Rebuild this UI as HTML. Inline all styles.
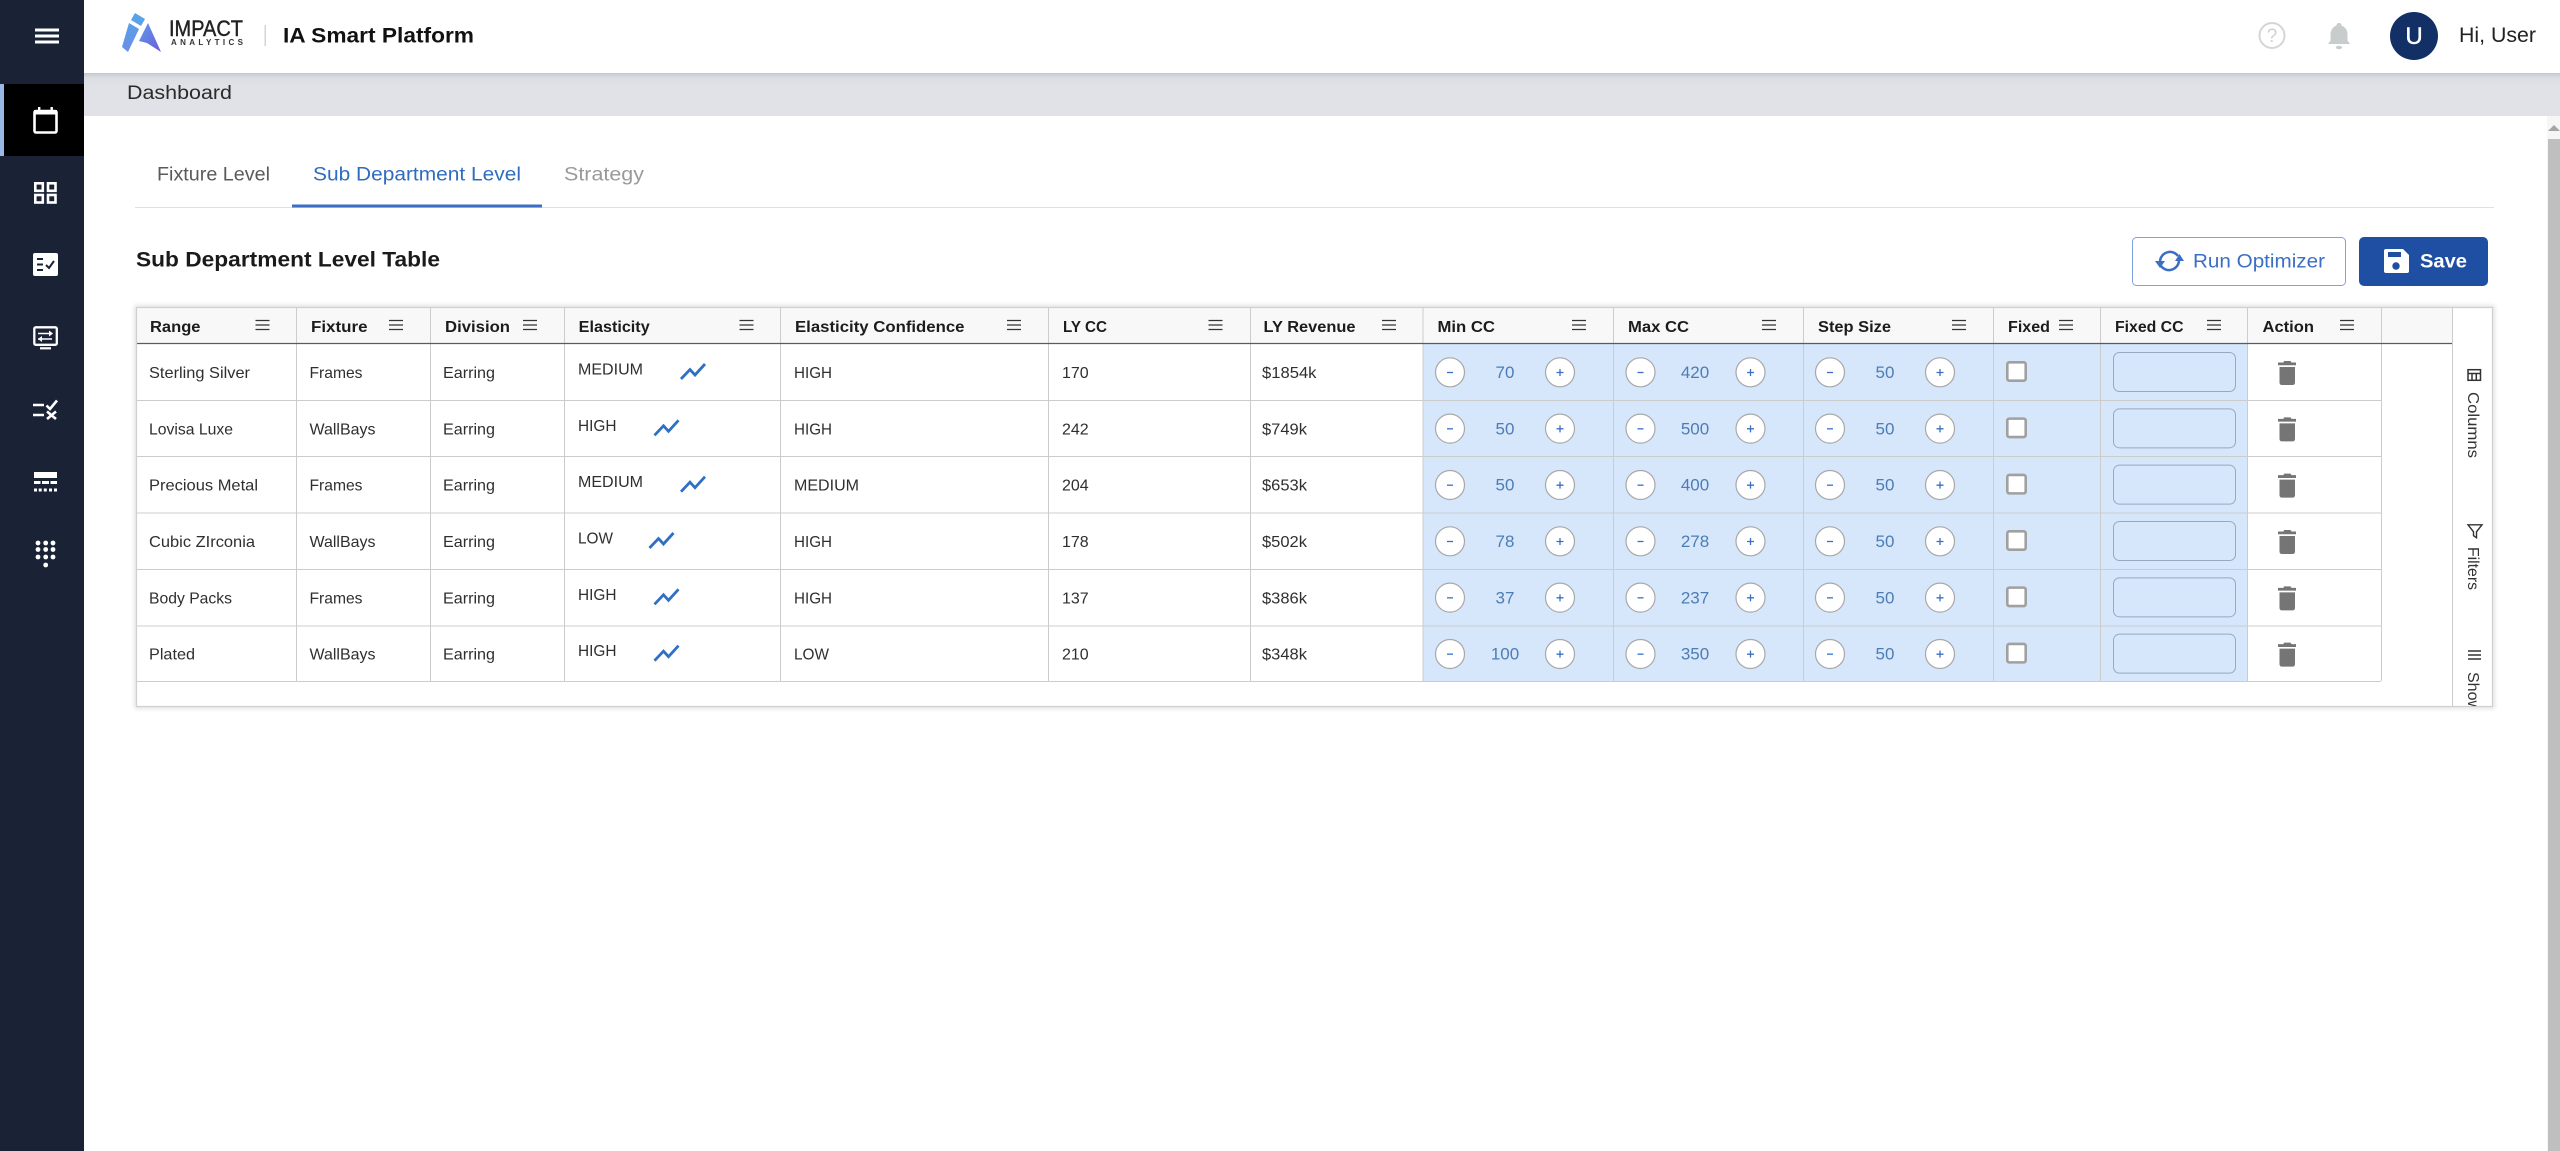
<!DOCTYPE html>
<html lang="en">
<head>
<meta charset="utf-8">
<title>IA Smart Platform</title>
<style>
html,body{margin:0;padding:0;background:#fff;overflow:hidden;width:2560px;height:1151px}
svg{display:block}
text{font-family:"Liberation Sans",sans-serif}
.h{font-size:16px;font-weight:700;fill:#1c1c1c}
.d{font-size:16px;fill:#2f2f2f}
.v{font-size:17px;fill:#4d7db5;text-anchor:middle}
.s{font-size:16px;fill:#333}
</style>
</head>
<body>
<svg xmlns="http://www.w3.org/2000/svg" width="2560" height="1151" viewBox="0 0 2560 1151">
<defs>
<linearGradient id="lg" x1="0" y1="0" x2="0" y2="1"><stop offset="0" stop-color="#58a0ea"/><stop offset="1" stop-color="#6a8ee6"/></linearGradient>
<linearGradient id="lr" x1="0" y1="0" x2="1" y2="1"><stop offset="0" stop-color="#5f9cea"/><stop offset="1" stop-color="#6a5adc"/></linearGradient>
<linearGradient id="bs" x1="0" y1="0" x2="0" y2="1"><stop offset="0" stop-color="#c4c7ce"/><stop offset="0.35" stop-color="#dcdee4"/><stop offset="1" stop-color="#e0e2e8"/></linearGradient>
<filter id="sh" x="-2%" y="-5%" width="104%" height="110%"><feGaussianBlur stdDeviation="2"/></filter>
<clipPath id="pc"><rect x="2452" y="307" width="41" height="399"/></clipPath>
<g id="mn"><path d="M0 0.5h14M0 5h14M0 9.5h14" stroke="#333" stroke-width="1.3" fill="none"/></g>
<g id="tr"><path d="M1 16L10 6.5L15 12L25 1" stroke="#2f6fc4" stroke-width="2.8" fill="none"/></g>
<g id="st">
<circle cx="0" cy="372.3" r="14.5" fill="#fff" stroke="#a8a8a8" stroke-width="1.2"/>
<path d="M-3 372.5h6" stroke="#3b6fc4" stroke-width="1.3"/>
<circle cx="110" cy="372.3" r="14.5" fill="#fff" stroke="#a8a8a8" stroke-width="1.2"/>
<path d="M106.500 372.500h7M110 369v7" stroke="#3b6fc4" stroke-width="1.3"/>
</g>
<g id="cb"><rect x="2007.300" y="362.300" width="18.400" height="18.400" rx="2" fill="#fff" stroke="#a0a0a0" stroke-width="2.600"/></g>
<g id="ip"><rect x="2113.500" y="352.500" width="122" height="39" rx="6" fill="#d6e6fb" stroke="#98a8c0" stroke-width="1"/></g>
<g id="tb" fill="#757575"><path d="M2284 361h6.500l1 1.500h4.500v2.800h-18v-2.800h5.500z"/><path d="M2279.500 367h15.500v15.500q0 2.500-2.500 2.500h-10.500q-2.500 0-2.500-2.500z"/></g>
</defs>

<!-- page base -->
<rect width="2560" height="1151" fill="#fff"/>

<!-- breadcrumb band -->
<rect x="84" y="73" width="2476" height="43" fill="#e0e2e8"/>
<rect x="84" y="73" width="2476" height="14" fill="url(#bs)"/>
<text x="127" y="99" font-size="19" fill="#2b2b2b" textLength="105" lengthAdjust="spacingAndGlyphs">Dashboard</text>

<!-- header -->
<rect x="84" y="0" width="2476" height="73" fill="#fff"/>
<polygon points="135,13 145,19 141,26 131,20" fill="#5aa2ea"/>
<polygon points="129,23 139,29 128,52 122,47" fill="url(#lg)"/>
<polygon points="148,23 161,52 147,43 139,41" fill="url(#lr)"/>
<text x="169" y="36" font-size="22" fill="#222" stroke="#222" stroke-width=".4" textLength="74" lengthAdjust="spacingAndGlyphs">IMPACT</text>
<text x="171" y="45" font-size="8" font-weight="700" fill="#333" textLength="72" lengthAdjust="spacing">ANALYTICS</text>
<rect x="264.500" y="25" width="1.500" height="21" fill="#d4d4d4"/>
<text x="283" y="42.500" font-size="21" font-weight="700" fill="#111" textLength="191" lengthAdjust="spacingAndGlyphs">IA Smart Platform</text>

<circle cx="2272" cy="35.500" r="12.500" fill="none" stroke="#d4d6d6" stroke-width="2"/>
<text x="2272" y="42" font-size="19" fill="#cfd1d1" text-anchor="middle">?</text>
<path d="M2339 23c-1.500 0-2.500 1-2.500 2.500c-4 1.500-6 5-6 9v6l-2.500 3.500h22l-2.500-3.500v-6c0-4-2-7.500-6-9c0-1.500-1-2.500-2.500-2.500z" fill="#c8cccc"/>
<ellipse cx="2339" cy="47.500" rx="3" ry="1.700" fill="#c8cccc"/>
<circle cx="2414" cy="36" r="24" fill="#122f66"/>
<text x="2414" y="44" font-size="24" fill="#fff" stroke="#fff" stroke-width=".4" text-anchor="middle">U</text>
<text x="2459" y="42" font-size="21" fill="#222" textLength="77" lengthAdjust="spacingAndGlyphs">Hi, User</text>

<!-- sidebar -->
<rect x="0" y="0" width="84" height="1151" fill="#1a2236"/>
<rect x="0" y="84" width="84" height="72" fill="#000"/>
<rect x="0" y="84" width="4" height="72" fill="#9ab8e6"/>
<path d="M35 30h24M35 36h24M35 42h24" stroke="#fff" stroke-width="3" fill="none"/>
<!-- calendar -->
<rect x="34.500" y="111" width="22" height="21.500" rx="1.500" fill="none" stroke="#fff" stroke-width="2.600"/>
<rect x="34" y="110" width="23" height="4.500" fill="#fff"/>
<rect x="38" y="107" width="2.400" height="4" fill="#fff"/><rect x="50.500" y="107" width="2.400" height="4" fill="#fff"/>
<!-- grid -->
<g fill="none" stroke="#fff" stroke-width="2.600"><rect x="35.300" y="183.300" width="7.500" height="7.500"/><rect x="48" y="183.300" width="7.500" height="7.500"/><rect x="35.300" y="195" width="7.500" height="7.500"/><rect x="48" y="195" width="7.500" height="7.500"/></g>
<!-- list check -->
<rect x="33" y="253" width="25" height="23" rx="2" fill="#fff"/>
<path d="M37 259h6M37 264.500h6M37 270h6" stroke="#1a2236" stroke-width="2" fill="none"/>
<path d="M46 265l3 3l5-7" stroke="#1a2236" stroke-width="2" fill="none"/>
<!-- monitor -->
<rect x="34.300" y="327.300" width="22.500" height="17.500" rx="1.500" fill="none" stroke="#fff" stroke-width="2.300"/>
<path d="M40 348.300h11" stroke="#fff" stroke-width="2.200"/>
<path d="M38 333.500h14M38 339h14" stroke="#fff" stroke-width="1.600"/>
<path d="M49 330.500l4 3l-4 3zM42 336l-4 3l4 3z" fill="#fff"/>
<!-- rule -->
<path d="M33 405h11M33 415h11" stroke="#fff" stroke-width="2.500"/>
<path d="M46.500 405.500l3.500 3.500l7-8.500M47 411.500l9 7.500M56 411.500l-9 7.500" stroke="#fff" stroke-width="2.600" fill="none"/>
<!-- table -->
<rect x="34" y="472" width="23" height="6" fill="#fff"/>
<path d="M34 482.500h6.500M42 482.500h7M50.500 482.500h6.500" stroke="#fff" stroke-width="3"/>
<path d="M34 490h3M38.700 490h3M43.800 490h3M49 490h3M54 490h3" stroke="#fff" stroke-width="3"/>
<!-- dialpad -->
<g fill="#fff"><circle cx="38" cy="543" r="2.400"/><circle cx="45.700" cy="543" r="2.400"/><circle cx="53" cy="543" r="2.400"/><circle cx="38" cy="549.500" r="2.400"/><circle cx="45.700" cy="549.500" r="2.400"/><circle cx="53" cy="549.500" r="2.400"/><circle cx="38" cy="557" r="2.400"/><circle cx="45.700" cy="557" r="2.400"/><circle cx="53" cy="557" r="2.400"/><circle cx="45.700" cy="565" r="2.400"/></g>

<!-- tabs -->
<text x="157" y="180.500" font-size="19" fill="#5a5a5a" textLength="113" lengthAdjust="spacingAndGlyphs">Fixture Level</text>
<text x="313" y="180.500" font-size="19" fill="#2f6cc0" textLength="208" lengthAdjust="spacingAndGlyphs">Sub Department Level</text>
<text x="564" y="180.500" font-size="19" fill="#9a9a9a" textLength="80" lengthAdjust="spacingAndGlyphs">Strategy</text>
<rect x="135" y="207" width="2359" height="1" fill="#e0e0e0"/>
<rect x="292" y="204.500" width="250" height="3" fill="#3b6fc4"/>

<text x="136" y="266.500" font-size="21" font-weight="700" fill="#1a1a1a" textLength="304" lengthAdjust="spacingAndGlyphs">Sub Department Level Table</text>

<!-- buttons -->
<rect x="2132.500" y="237.500" width="213" height="48" rx="4" fill="#fff" stroke="#7fa3e0" stroke-width="1"/>
<g fill="none" stroke="#3b6fc4" stroke-width="2.500"><path d="M2160 261A10 10 0 0 1 2178 256"/><path d="M2179 261A10 10 0 0 1 2161 266"/></g>
<polygon points="2175,261 2184,261 2179.500,254" fill="#3b6fc4"/>
<polygon points="2155,261 2165,261 2160,268" fill="#3b6fc4"/>
<text x="2193" y="267.500" font-size="19" fill="#3b6fc4" textLength="132" lengthAdjust="spacingAndGlyphs">Run Optimizer</text>

<rect x="2359" y="237" width="129" height="49" rx="5" fill="#1f4fa3"/>
<path d="M2386 249h17l6 6v16a2 2 0 0 1-2 2h-21a2 2 0 0 1-2-2v-20a2 2 0 0 1 2-2z" fill="#fff"/>
<rect x="2388" y="252" width="13" height="5" fill="#1f4fa3"/>
<circle cx="2396" cy="266" r="3.700" fill="#1f4fa3"/>
<text x="2420" y="267.500" font-size="19" font-weight="700" fill="#fff" textLength="47" lengthAdjust="spacingAndGlyphs">Save</text>

<!-- scrollbar -->
<rect x="2547" y="116" width="13" height="1035" fill="#f6f6f6"/>
<polygon points="2554,125 2560,131 2548,131" fill="#a4a4a4"/>
<rect x="2548" y="139" width="12" height="1012" fill="#bfbfbf"/>

<!-- grid container -->
<rect x="134" y="305" width="2361" height="404" fill="#000" opacity=".1" filter="url(#sh)"/>
<rect x="136" y="307" width="2357" height="400" fill="#fff"/>
<rect x="136" y="308" width="2316.500" height="36" fill="#f8f8f8"/>
<rect x="1423" y="344" width="824.500" height="337.500" fill="#d6e6fb"/>

<!-- row lines -->
<g stroke="#cccccc" stroke-width="1" fill="none">
<path d="M136 400.500H2381M136 456.500H2381M136 513H2381M136 569.500H2381M136 626H2381M136 681.500H2381"/>
<path d="M296.500 308V681M430.500 308V681M564.500 308V681M780.500 308V681M1048.500 308V681M1250.500 308V681M1423 308V681M1613.500 308V681M1803.500 308V681M1993.500 308V681M2100.500 308V681M2247.500 308V681M2381.500 308V681"/>
</g>
<path d="M136 343.500H2452.500" stroke="#4f5f68" stroke-width="1.200"/>
<rect x="136.500" y="307.500" width="2356" height="399" fill="none" stroke="#d0d0d0" stroke-width="1.200"/>
<path d="M2452.500 308V706" stroke="#cccccc" stroke-width="1"/>

<!-- header text -->
<text class="h" x="150" y="332" textLength="50.500" lengthAdjust="spacingAndGlyphs">Range</text>
<use href="#mn" x="255.500" y="320"/>
<text class="h" x="311" y="332" textLength="56.500" lengthAdjust="spacingAndGlyphs">Fixture</text>
<use href="#mn" x="389" y="320"/>
<text class="h" x="445" y="332" textLength="65" lengthAdjust="spacingAndGlyphs">Division</text>
<use href="#mn" x="523" y="320"/>
<text class="h" x="578.700" y="332" textLength="71" lengthAdjust="spacingAndGlyphs">Elasticity</text>
<use href="#mn" x="739.500" y="320"/>
<text class="h" x="795" y="332" textLength="169.500" lengthAdjust="spacingAndGlyphs">Elasticity Confidence</text>
<use href="#mn" x="1007" y="320"/>
<text class="h" x="1063" y="332" textLength="44" lengthAdjust="spacingAndGlyphs">LY CC</text>
<use href="#mn" x="1208.500" y="320"/>
<text class="h" x="1263.500" y="332" textLength="92" lengthAdjust="spacingAndGlyphs">LY Revenue</text>
<use href="#mn" x="1382" y="320"/>
<text class="h" x="1437.500" y="332" textLength="57.500" lengthAdjust="spacingAndGlyphs">Min CC</text>
<use href="#mn" x="1572" y="320"/>
<text class="h" x="1628" y="332" textLength="61" lengthAdjust="spacingAndGlyphs">Max CC</text>
<use href="#mn" x="1762" y="320"/>
<text class="h" x="1818" y="332" textLength="73" lengthAdjust="spacingAndGlyphs">Step Size</text>
<use href="#mn" x="1952" y="320"/>
<text class="h" x="2008" y="332" textLength="42" lengthAdjust="spacingAndGlyphs">Fixed</text>
<use href="#mn" x="2059" y="320"/>
<text class="h" x="2115" y="332" textLength="68.500" lengthAdjust="spacingAndGlyphs">Fixed CC</text>
<use href="#mn" x="2207" y="320"/>
<text class="h" x="2262.500" y="332" textLength="51.500" lengthAdjust="spacingAndGlyphs">Action</text>
<use href="#mn" x="2340" y="320"/>

<!-- row 1 -->
<g>
<text class="d" x="149" y="378" textLength="101" lengthAdjust="spacingAndGlyphs">Sterling Silver</text>
<text class="d" x="309.500" y="378" textLength="53" lengthAdjust="spacingAndGlyphs">Frames</text>
<text class="d" x="443" y="378" textLength="52" lengthAdjust="spacingAndGlyphs">Earring</text>
<text class="d" x="578" y="374.500" textLength="65" lengthAdjust="spacingAndGlyphs">MEDIUM</text>
<use href="#tr" x="680" y="363"/>
<text class="d" x="794" y="378" textLength="38" lengthAdjust="spacingAndGlyphs">HIGH</text>
<text class="d" x="1062" y="378">170</text>
<text class="d" x="1262" y="378" textLength="54.500" lengthAdjust="spacingAndGlyphs">$1854k</text>
<use href="#st" x="1450"/><text class="v" x="1505" y="378">70</text>
<use href="#st" x="1640.500"/><text class="v" x="1695" y="378">420</text>
<use href="#st" x="1830"/><text class="v" x="1885" y="378">50</text>
<use href="#cb"/><use href="#ip"/><use href="#tb"/>
</g>
<!-- row 2 -->
<g transform="translate(0,56.330)">
<text class="d" x="149" y="378" textLength="84" lengthAdjust="spacingAndGlyphs">Lovisa Luxe</text>
<text class="d" x="309.500" y="378" textLength="66" lengthAdjust="spacingAndGlyphs">WallBays</text>
<text class="d" x="443" y="378" textLength="52" lengthAdjust="spacingAndGlyphs">Earring</text>
<text class="d" x="578" y="374.500" textLength="38.500" lengthAdjust="spacingAndGlyphs">HIGH</text>
<use href="#tr" x="653.500" y="363"/>
<text class="d" x="794" y="378" textLength="38" lengthAdjust="spacingAndGlyphs">HIGH</text>
<text class="d" x="1062" y="378">242</text>
<text class="d" x="1262" y="378" textLength="45" lengthAdjust="spacingAndGlyphs">$749k</text>
<use href="#st" x="1450"/><text class="v" x="1505" y="378">50</text>
<use href="#st" x="1640.500"/><text class="v" x="1695" y="378">500</text>
<use href="#st" x="1830"/><text class="v" x="1885" y="378">50</text>
<use href="#cb"/><use href="#ip"/><use href="#tb"/>
</g>
<!-- row 3 -->
<g transform="translate(0,112.670)">
<text class="d" x="149" y="378" textLength="109" lengthAdjust="spacingAndGlyphs">Precious Metal</text>
<text class="d" x="309.500" y="378" textLength="53" lengthAdjust="spacingAndGlyphs">Frames</text>
<text class="d" x="443" y="378" textLength="52" lengthAdjust="spacingAndGlyphs">Earring</text>
<text class="d" x="578" y="374.500" textLength="65" lengthAdjust="spacingAndGlyphs">MEDIUM</text>
<use href="#tr" x="680" y="363"/>
<text class="d" x="794" y="378" textLength="65" lengthAdjust="spacingAndGlyphs">MEDIUM</text>
<text class="d" x="1062" y="378">204</text>
<text class="d" x="1262" y="378" textLength="45" lengthAdjust="spacingAndGlyphs">$653k</text>
<use href="#st" x="1450"/><text class="v" x="1505" y="378">50</text>
<use href="#st" x="1640.500"/><text class="v" x="1695" y="378">400</text>
<use href="#st" x="1830"/><text class="v" x="1885" y="378">50</text>
<use href="#cb"/><use href="#ip"/><use href="#tb"/>
</g>
<!-- row 4 -->
<g transform="translate(0,169)">
<text class="d" x="149" y="378" textLength="106" lengthAdjust="spacingAndGlyphs">Cubic ZIrconia</text>
<text class="d" x="309.500" y="378" textLength="66" lengthAdjust="spacingAndGlyphs">WallBays</text>
<text class="d" x="443" y="378" textLength="52" lengthAdjust="spacingAndGlyphs">Earring</text>
<text class="d" x="578" y="374.500" textLength="35" lengthAdjust="spacingAndGlyphs">LOW</text>
<use href="#tr" x="648.500" y="363"/>
<text class="d" x="794" y="378" textLength="38" lengthAdjust="spacingAndGlyphs">HIGH</text>
<text class="d" x="1062" y="378">178</text>
<text class="d" x="1262" y="378" textLength="45" lengthAdjust="spacingAndGlyphs">$502k</text>
<use href="#st" x="1450"/><text class="v" x="1505" y="378">78</text>
<use href="#st" x="1640.500"/><text class="v" x="1695" y="378">278</text>
<use href="#st" x="1830"/><text class="v" x="1885" y="378">50</text>
<use href="#cb"/><use href="#ip"/><use href="#tb"/>
</g>
<!-- row 5 -->
<g transform="translate(0,225.330)">
<text class="d" x="149" y="378" textLength="83" lengthAdjust="spacingAndGlyphs">Body Packs</text>
<text class="d" x="309.500" y="378" textLength="53" lengthAdjust="spacingAndGlyphs">Frames</text>
<text class="d" x="443" y="378" textLength="52" lengthAdjust="spacingAndGlyphs">Earring</text>
<text class="d" x="578" y="374.500" textLength="38.500" lengthAdjust="spacingAndGlyphs">HIGH</text>
<use href="#tr" x="653.500" y="363"/>
<text class="d" x="794" y="378" textLength="38" lengthAdjust="spacingAndGlyphs">HIGH</text>
<text class="d" x="1062" y="378">137</text>
<text class="d" x="1262" y="378" textLength="45" lengthAdjust="spacingAndGlyphs">$386k</text>
<use href="#st" x="1450"/><text class="v" x="1505" y="378">37</text>
<use href="#st" x="1640.500"/><text class="v" x="1695" y="378">237</text>
<use href="#st" x="1830"/><text class="v" x="1885" y="378">50</text>
<use href="#cb"/><use href="#ip"/><use href="#tb"/>
</g>
<!-- row 6 -->
<g transform="translate(0,281.670)">
<text class="d" x="149" y="378" textLength="46" lengthAdjust="spacingAndGlyphs">Plated</text>
<text class="d" x="309.500" y="378" textLength="66" lengthAdjust="spacingAndGlyphs">WallBays</text>
<text class="d" x="443" y="378" textLength="52" lengthAdjust="spacingAndGlyphs">Earring</text>
<text class="d" x="578" y="374.500" textLength="38.500" lengthAdjust="spacingAndGlyphs">HIGH</text>
<use href="#tr" x="653.500" y="363"/>
<text class="d" x="794" y="378" textLength="35" lengthAdjust="spacingAndGlyphs">LOW</text>
<text class="d" x="1062" y="378">210</text>
<text class="d" x="1262" y="378" textLength="45" lengthAdjust="spacingAndGlyphs">$348k</text>
<use href="#st" x="1450"/><text class="v" x="1505" y="378">100</text>
<use href="#st" x="1640.500"/><text class="v" x="1695" y="378">350</text>
<use href="#st" x="1830"/><text class="v" x="1885" y="378">50</text>
<use href="#cb"/><use href="#ip"/><use href="#tb"/>
</g>

<!-- side panel -->
<g clip-path="url(#pc)">
<g fill="none" stroke="#333" stroke-width="1.500">
<rect x="2468" y="369.700" width="12.500" height="10.600"/><path d="M2468 373.500h12.500M2472 373.500v7M2476.300 373.500v7"/>
<path d="M2468 524.800h14l-5.500 7v6l-3-2.200v-3.800z" stroke-width="1.400"/>
<path d="M2468 651h13M2468 655h13M2468 659h13"/>
</g>
<text class="s" transform="translate(2468,392) rotate(90)" textLength="66" lengthAdjust="spacingAndGlyphs">Columns</text>
<text class="s" transform="translate(2468,547) rotate(90)" textLength="43" lengthAdjust="spacingAndGlyphs">Filters</text>
<text class="s" transform="translate(2468,672) rotate(90)">Show</text>
</g>
</svg>
</body>
</html>
